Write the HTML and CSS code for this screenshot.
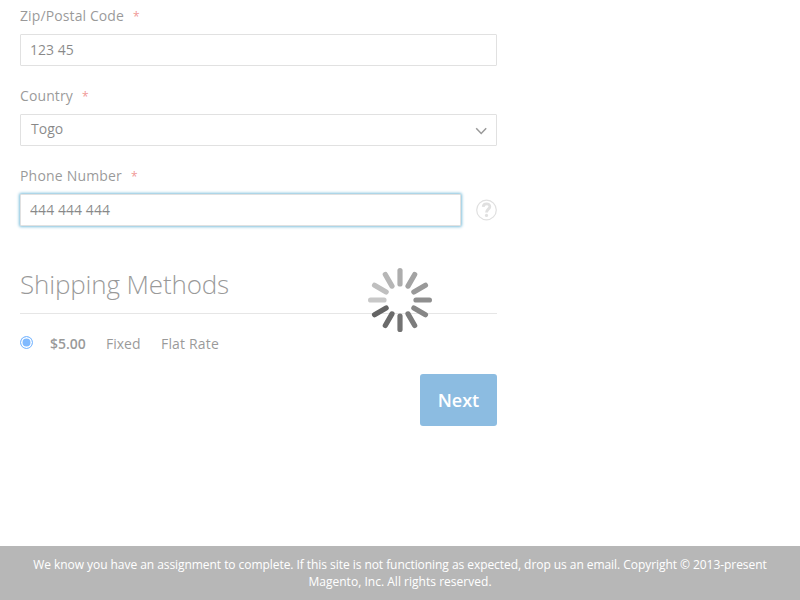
FILE: index.html
```html
<!DOCTYPE html>
<html lang="en">
<head>
<meta charset="utf-8">
<title>Checkout</title>
<link rel="stylesheet" href="styles.css">
</head>
<body>
<main class="checkout">
  <form class="shipping">
    <div class="field">
      <label class="label" for="zip">Zip/Postal Code<span class="required">*</span></label>
      <input class="input" id="zip" type="text" value="123 45">
    </div>
    <div class="field">
      <label class="label" for="country">Country<span class="required">*</span></label>
      <div class="select" id="country">
        <span>Togo</span>
        <svg class="chevron" width="12" height="8" viewBox="0 0 12 8"><path d="M1.200 1.200 6.200 6.400l5-5.200"/></svg>
      </div>
    </div>
    <div class="field">
      <label class="label label-phone" for="phone">Phone Number<span class="required">*</span></label>
      <div class="phone-row">
        <input class="input input-focused" id="phone" type="text" value="444 444 444">
        <svg class="help" width="21" height="21" viewBox="0 0 21 21"><circle cx="10.500" cy="10" r="9.800"/><path d="M7.200 6.900C7.400 2.700 14 2.800 13.800 6.800C13.600 9.200 10.500 9.300 10.500 12.600"/><circle class="dot" cx="10.500" cy="15.400" r="1.600"/></svg>
      </div>
    </div>
    <h2 class="title">Shipping Methods</h2>
    <div class="method">
      <span class="radio"></span>
      <strong class="price">$5.00</strong>
      <span class="fixed">Fixed</span>
      <span class="carrier">Flat Rate</span>
    </div>
    <div class="actions"><button class="next" type="button">Next</button></div>
  </form>
</main>
<footer class="footer">We know you have an assignment to complete. If this site is not functioning as expected, drop us an email. Copyright © 2013-present <span class="footer-end">Magento, Inc. All rights reserved.</span></footer>
<div class="loading-mask">
  <svg width="64" height="64" viewBox="-32 -32 64 64" stroke-width="5.200" stroke-linecap="round">
    <path stroke="#adadad" d="M0-16V-29.400"/>
    <path stroke="#a3a3a3" d="M0-16V-29.400" transform="rotate(30)"/>
    <path stroke="#999" d="M0-16V-29.400" transform="rotate(60)"/>
    <path stroke="#8f8f8f" d="M0-16V-29.400" transform="rotate(90)"/>
    <path stroke="#868686" d="M0-16V-29.400" transform="rotate(120)"/>
    <path stroke="#7c7c7c" d="M0-16V-29.400" transform="rotate(150)"/>
    <path stroke="#737373" d="M0-16V-29.400" transform="rotate(180)"/>
    <path stroke="#6b6b6b" d="M0-16V-29.400" transform="rotate(210)"/>
    <path stroke="#646464" d="M0-16V-29.400" transform="rotate(240)"/>
    <path stroke="#c8c8c8" d="M0-16V-29.400" transform="rotate(270)"/>
    <path stroke="#bfbfbf" d="M0-16V-29.400" transform="rotate(300)"/>
    <path stroke="#b6b6b6" d="M0-16V-29.400" transform="rotate(330)"/>
  </svg>
</div>
</body>
</html>
```
FILE: styles.css
```css
* { box-sizing: border-box; }
body {
  margin: 0;
  height: 600px;
  display: flex;
  flex-direction: column;
  overflow: hidden;
  background: #fff;
  color: #333;
  font: 14px/20px "Open Sans", sans-serif;
}
.checkout { flex: 1; padding: 6px 20px 0; }
.shipping { width: 477px; }
.field { height: 80px; }
.label { display: block; height: 28px; letter-spacing: .11px; }
.label-phone { letter-spacing: .19px; }
.required { margin-left: 9px; color: #e02b27; font-size: 12px; }
.input, .select {
  display: block;
  width: 100%;
  height: 32px;
  padding: 0 9px 2px;
  border: 1px solid #c2c2c2;
  border-radius: 1px;
  background: #fff;
  color: #111;
  font: 14px/20px "Open Sans", sans-serif;
  outline: none;
}
.select {
  display: flex;
  align-items: center;
  justify-content: space-between;
  padding: 0 9px 2px 10px;
}
.chevron { margin-top: 4px; fill: none; stroke: #333; stroke-width: 1.500; }
.phone-row { display: flex; align-items: center; justify-content: space-between; }
.input-focused { width: 441px; letter-spacing: .07px; box-shadow: 0 0 3px 1px #0080b8; }
.help { overflow: visible; fill: none; stroke: #c0c0c0; stroke-width: 1.200; }
.help path { stroke-width: 2.800; }
.help .dot { fill: #c0c0c0; stroke: none; }
.title {
  height: 49px;
  margin: 19px 0 0;
  padding-top: 5px;
  border-bottom: 1px solid #ccc;
  font-size: 26px;
  line-height: 28px;
  font-weight: 300;
  letter-spacing: -.15px;
}
.method { display: flex; height: 20px; margin-top: 20px; }
.radio {
  width: 13px;
  height: 13px;
  margin: 2px 17px 0 0;
  border: 1px solid #0075ff;
  border-radius: 50%;
  background: #0075ff;
  box-shadow: inset 0 0 0 1.500px #fff;
}
.price { width: 56px; font-weight: 600; }
.fixed { width: 55px; }
.carrier { letter-spacing: .17px; }
.actions { display: flex; justify-content: flex-end; margin-top: 20px; }
.next {
  width: 77px;
  height: 52px;
  padding: 0;
  border: 0;
  border-radius: 3px;
  background: #1979c3;
  color: #fff;
  font: 600 18px/26px "Open Sans", sans-serif;
}
.footer {
  height: 54px;
  padding: 10px 30px 0;
  background: #6f6f6f;
  color: #fff;
  font-size: 12px;
  line-height: 17px;
  letter-spacing: -.055px;
  text-align: center;
}
.footer-end { letter-spacing: .02px; }
.loading-mask {
  position: absolute;
  inset: 0;
  display: flex;
  align-items: center;
  justify-content: center;
  background: rgba(255, 255, 255, .5);
}
```
